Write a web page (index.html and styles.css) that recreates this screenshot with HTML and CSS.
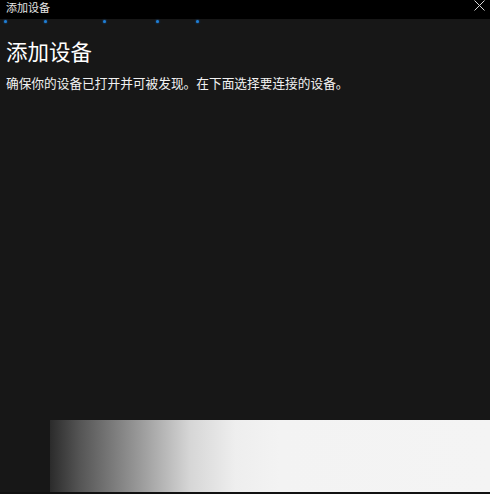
FILE: index.html
```html
<!DOCTYPE html>
<html lang="zh">
<head>
<meta charset="utf-8">
<link rel="stylesheet" href="styles.css">
</head>
<body>
<div class="window">
  <div class="titlebar">
    <span class="title">添加设备</span>
    <svg class="close" width="11" height="11" viewBox="0 0 11 11"><path d="M0.5 0.5L10.5 10.5M10.5 0.5L0.5 10.5" stroke="#d8d8d8" stroke-width="1"/></svg>
  </div>
  <div class="progress">
    <span class="dot d1"></span>
    <span class="dot d2"></span>
    <span class="dot d3"></span>
    <span class="dot d4"></span>
    <span class="dot d5"></span>
  </div>
  <div class="content">
    <h1 class="heading">添加设备</h1>
    <p class="desc">确保你的设备已打开并可被发现。在下面选择要连接的设备。</p>
  </div>
  <div class="footer">
    <div class="fade"></div>
  </div>
  <div class="bottom-line"></div>
</div>
</body>
</html>
```

FILE: styles.css
```css
html, body {
  margin: 0;
  padding: 0;
  background: #171717;
}
body {
  font-family: "Noto Sans CJK SC", "Noto Sans", sans-serif;
  color: #ffffff;
}
.window {
  width: 490px;
  height: 494px;
  display: flex;
  flex-direction: column;
  background: #171717;
  overflow: hidden;
}
.titlebar {
  height: 19px;
  background: #000000;
  display: flex;
  align-items: flex-start;
  justify-content: space-between;
  padding: 0 5px 0 6px;
  flex-shrink: 0;
}
.title {
  font-size: 11px;
  line-height: 15px;
  color: #e6e6e6;
}
.progress {
  height: 4px;
  display: flex;
  align-items: center;
  flex-shrink: 0;
}
.dot {
  width: 3px;
  height: 3px;
  border-radius: 50%;
  background: #1f7fd6;
  box-shadow: 0 0 2px #1a6cc0;
}
.d1 { margin-left: 4px; }
.d2 { margin-left: 37px; }
.d3 { margin-left: 56px; }
.d4 { margin-left: 50px; }
.d5 { margin-left: 37px; }
.content {
  padding: 0 6px;
  flex: 1;
}
.heading {
  margin: 13px 0 0 0;
  font-size: 21.5px;
  font-weight: 400;
  line-height: 30px;
  color: #ffffff;
}
.desc {
  margin: 9px 0 0 0;
  font-size: 12.7px;
  line-height: 16px;
  color: #f2f2f2;
}
.footer {
  height: 72px;
  padding-left: 50px;
  display: flex;
  flex-shrink: 0;
}
.fade {
  flex: 1;
  background: linear-gradient(to right, #2b2b2b 0px, #555 30px, #9a9a9a 90px, #d6d6d6 140px, #eeeeee 185px, #f3f3f3 230px, #f4f4f4 100%);
}
.bottom-line {
  height: 2px;
  background: #111;
  flex-shrink: 0;
}
```
